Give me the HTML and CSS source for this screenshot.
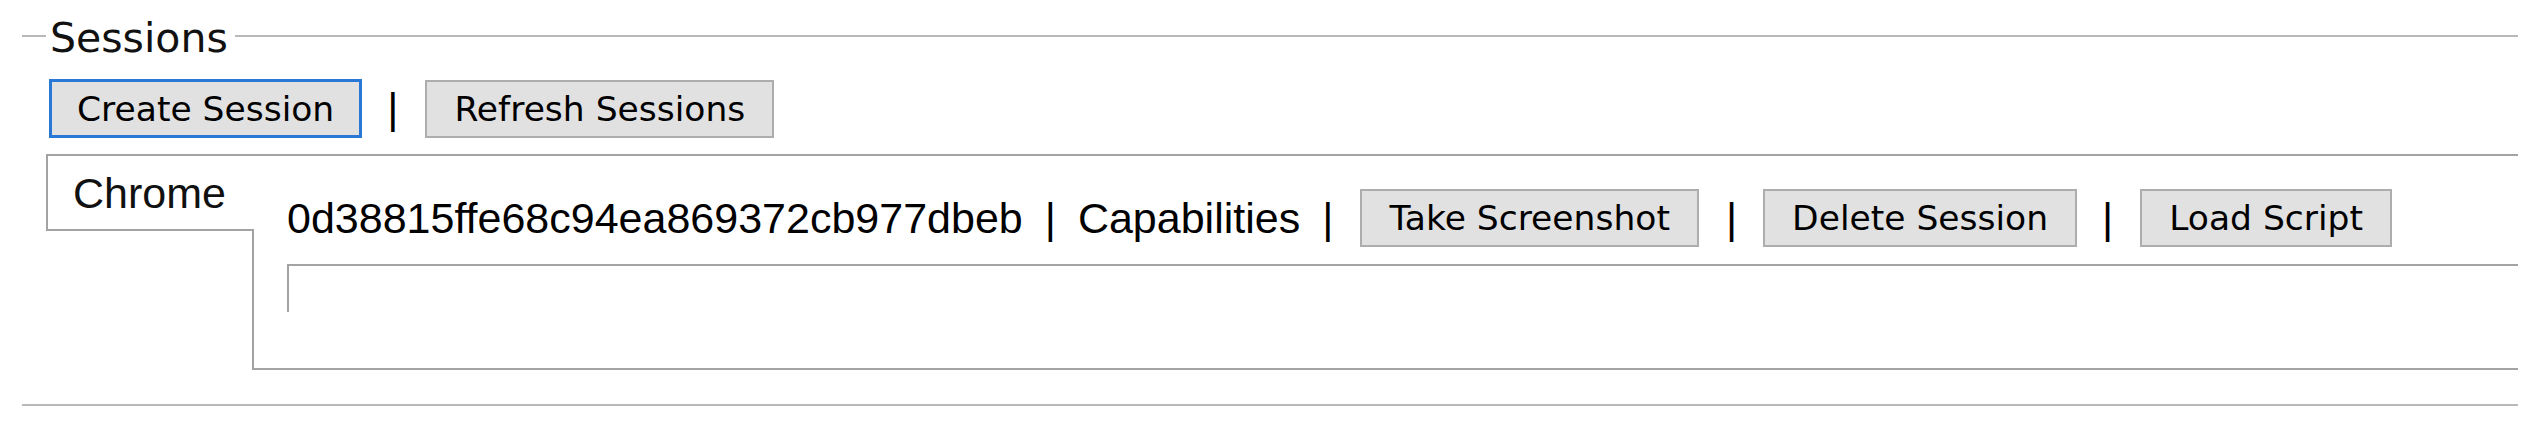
FILE: index.html
```html
<!DOCTYPE html>
<html lang="en">
<head>
<meta charset="utf-8">
<title>Sessions</title>
<link rel="stylesheet" href="styles.css">
</head>
<body>
<div class="page">
  <fieldset class="sessions">
    <legend class="sessions-legend">Sessions</legend>
    <div class="toolbar">
      <button class="btn btn-focus" type="button">Create Session</button>
      <span class="sep">|</span>
      <button class="btn" type="button">Refresh Sessions</button>
    </div>
    <div class="tabs">
      <div class="tablist">
        <div class="tab">Chrome</div>
        <div class="tab-fill"></div>
      </div>
      <div class="panel">
        <div class="session-row">
          <span class="session-id">0d38815ffe68c94ea869372cb977dbeb</span>
          <span class="sep sep-after-text sep-before-text">|</span>
          <span class="caps">Capabilities</span>
          <span class="sep sep-after-text">|</span>
          <button class="btn" type="button">Take Screenshot</button>
          <span class="sep sep-wide">|</span>
          <button class="btn" type="button">Delete Session</button>
          <span class="sep">|</span>
          <button class="btn" type="button">Load Script</button>
        </div>
        <div class="output"></div>
      </div>
    </div>
  </fieldset>
</div>
</body>
</html>
```
FILE: styles.css
```css
html, body {
  margin: 0;
  padding: 0;
  background: #ffffff;
}

body {
  font-family: "Liberation Sans", Arial, sans-serif;
  font-size: 43px;
  color: #000000;
}

.page {
  padding: 10px 24px 0 22px;
}

.sessions {
  margin: 0;
  min-width: 0;
  border: none;
  border-top: 2px solid #b9b9b9;
  border-bottom: 2px solid #b9b9b9;
  padding: 17px 0 34px 24px;
}

.sessions-legend {
  font-family: "DejaVu Sans", Verdana, sans-serif;
  font-size: 41px;
  line-height: normal;
  padding: 4px 7px 0 4px;
  color: #111111;
}

.toolbar {
  display: flex;
  align-items: center;
  padding-left: 3px;
}

.btn {
  font-family: "DejaVu Sans", Verdana, sans-serif;
  font-size: 34.5px;
  line-height: 40px;
  padding: 7px 27px;
  margin: 0;
  border: 2px solid #adadad;
  border-radius: 0;
  background: #e1e1e1;
  color: #000000;
  white-space: nowrap;
}

.btn-focus {
  border: 3px solid #2a78d6;
  padding: 6.5px 25px;
}

.sep {
  margin: 0 27px 0 25px;
  line-height: normal;
}

.sep-wide {
  margin-left: 27px;
  margin-right: 26px;
}

.sep-after-text {
  margin-left: 22px;
}

.sep-before-text {
  margin-right: 22px;
}

.tabs {
  display: flex;
  margin-top: 16px;
  border-top: 2px solid #a3a3a3;
}

.tablist {
  display: flex;
  flex-direction: column;
  width: 208px;
  flex: none;
}

.tab {
  border-left: 2px solid #a3a3a3;
  border-bottom: 2px solid #a3a3a3;
  padding: 13px 25px 11px 25px;
  line-height: normal;
  color: #111111;
}

.tab-fill {
  flex: 1;
  border-right: 2px solid #a3a3a3;
}

.panel {
  flex: 1;
  min-width: 0;
  border-bottom: 2px solid #a3a3a3;
  padding: 33px 0 56px 33px;
}

.session-row {
  display: flex;
  align-items: center;
  white-space: nowrap;
}

.session-id,
.caps {
  line-height: normal;
}

.output {
  margin-top: 17px;
  height: 46px;
  border-top: 2px solid #a3a3a3;
  border-left: 2px solid #a3a3a3;
}
```
